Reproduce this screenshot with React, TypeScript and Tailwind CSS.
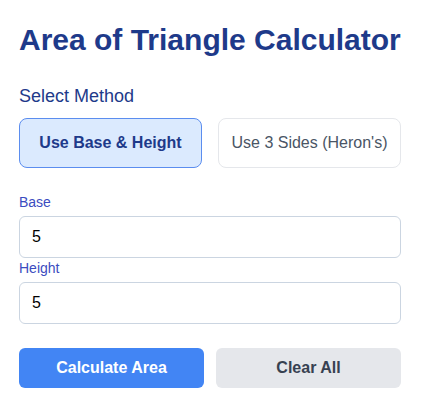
import React, { useState } from "react";

export default function App() {
  const [method, setMethod] = useState<"bh" | "heron">("bh");
  const [base, setBase] = useState("5");
  const [height, setHeight] = useState("5");

  return (
    <div className="min-h-screen bg-white pl-[19px] pt-[22px]" style={{ fontFamily: '"Liberation Sans", Arial, sans-serif' }}>
      <div className="w-[382px]">
        <h1 className="text-3xl font-bold text-[#1e3a8a] mb-6">Area of Triangle Calculator</h1>

        {/* Method selector */}
        <p className="text-lg text-[#1e3a8a] mb-2">Select Method</p>
        <div className="grid grid-cols-2 gap-4">
          <button
            onClick={() => setMethod("bh")}
            className={`h-[50px] rounded-lg border text-base ${
              method === "bh" ? "bg-[#dbeafe] border-[#5b8def] text-[#1e3a8a] font-bold" : "bg-white border-gray-200 text-gray-600"
            }`}
          >
            Use Base &amp; Height
          </button>
          <button
            onClick={() => setMethod("heron")}
            className={`h-[50px] rounded-lg border text-base ${
              method === "heron" ? "bg-[#dbeafe] border-[#5b8def] text-[#1e3a8a] font-bold" : "bg-white border-gray-200 text-gray-600"
            }`}
          >
            Use 3 Sides (Heron's)
          </button>
        </div>

        {/* Inputs */}
        <div className="mt-6">
          <label className="block text-sm text-[#3b4cc0] mb-1">Base</label>
          <input
            value={base}
            onChange={(e) => setBase(e.target.value)}
            className="w-full h-[42px] px-3 rounded-md border border-[#cbd5e1] text-base text-black outline-none"
          />
          <label className="block text-sm text-[#3b4cc0] mb-1">Height</label>
          <input
            value={height}
            onChange={(e) => setHeight(e.target.value)}
            className="w-full h-[42px] px-3 rounded-md border border-[#cbd5e1] text-base text-black outline-none"
          />
        </div>

        {/* Actions */}
        <div className="mt-6 grid grid-cols-2 gap-3">
          <button className="h-10 rounded-md bg-[#4285f4] text-white font-bold text-base">Calculate Area</button>
          <button
            onClick={() => {
              setBase("");
              setHeight("");
            }}
            className="h-10 rounded-md bg-[#e5e7eb] text-[#374151] font-bold text-base"
          >
            Clear All
          </button>
        </div>
      </div>
    </div>
  );
}
